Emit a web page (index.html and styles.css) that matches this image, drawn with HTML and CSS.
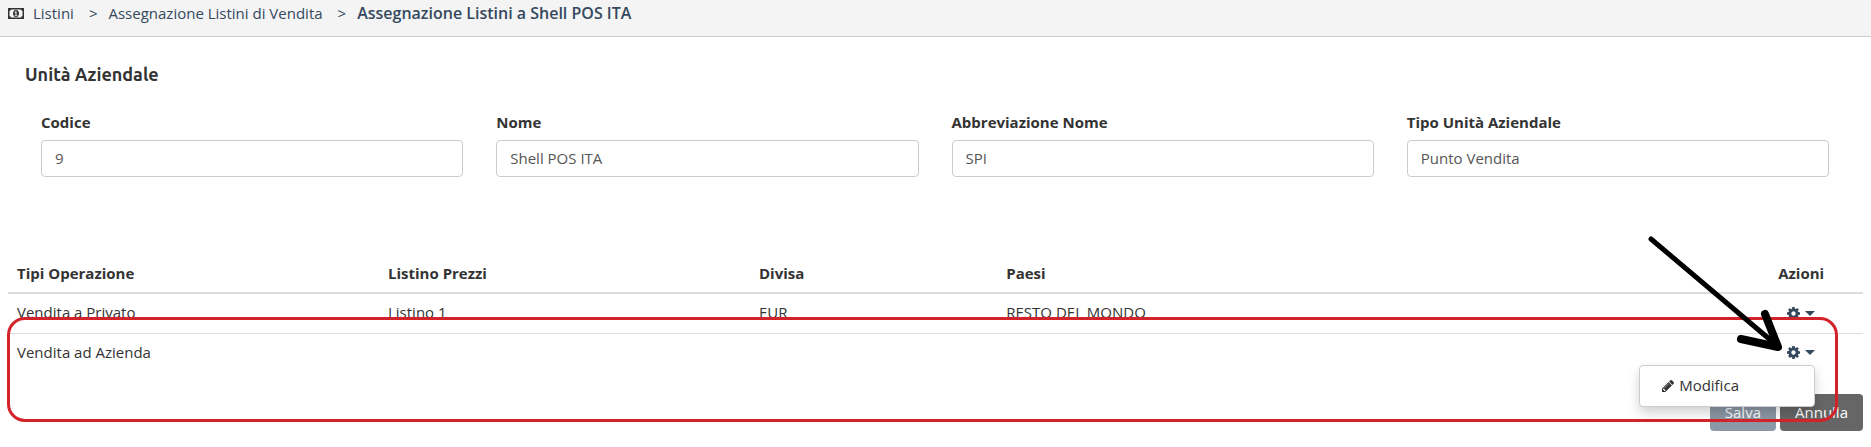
FILE: index.html
```html
<!DOCTYPE html>
<html lang="it">
<head>
    <meta charset="UTF-8">
    <meta name="viewport" content="width=device-width, initial-scale=1.0">
    <title>Assegnazione Listini</title>

    <link rel="stylesheet" href="styles.css">
</head>
<body>
    <nav class="breadcrumb">
        <svg class="icon-money" viewBox="0 0 16 11">
            <path fill-rule="evenodd" d="M0 0h16v11H0zM3 1.500A2 2 0 0 1 1.500 3v5A2 2 0 0 1 3 9.500h10A2 2 0 0 1 14.500 8V3A2 2 0 0 1 13 1.500z"/>
            <path fill-rule="evenodd" d="M8 2c2 0 3 1.600 3 3.500S10 9 8 9 5 7.400 5 5.500 6 2 8 2zM7.600 3.200L6.500 4.200l.5.600.5-.4V7h-.9v.8h2.800V7h-.9V3.200z"/>
        </svg>
        <a href="#">Listini</a>
        <span class="separator">&gt;</span>
        <a href="#">Assegnazione Listini di Vendita</a>
        <span class="separator">&gt;</span>
        <a href="#" class="current">Assegnazione Listini a Shell POS ITA</a>
    </nav>

    <main class="content">
        <h1>Unità Aziendale</h1>

        <div class="form-row">
            <div class="form-group">
                <label for="codice">Codice</label>
                <input type="text" id="codice" value="9" readonly>
            </div>
            <div class="form-group">
                <label for="nome">Nome</label>
                <input type="text" id="nome" value="Shell POS ITA" readonly>
            </div>
            <div class="form-group">
                <label for="abbreviazione">Abbreviazione Nome</label>
                <input type="text" id="abbreviazione" value="SPI" readonly>
            </div>
            <div class="form-group">
                <label for="tipo">Tipo Unità Aziendale</label>
                <input type="text" id="tipo" value="Punto Vendita" readonly>
            </div>
        </div>

        <div class="listini">
            <table>
                <thead>
                    <tr>
                        <th class="col-tipi">Tipi Operazione</th>
                        <th class="col-listino">Listino Prezzi</th>
                        <th class="col-divisa">Divisa</th>
                        <th class="col-paesi">Paesi</th>
                        <th class="col-azioni">Azioni</th>
                    </tr>
                </thead>
                <tbody>
                    <tr>
                        <td>Vendita a Privato</td>
                        <td>Listino 1</td>
                        <td>EUR</td>
                        <td>RESTO DEL MONDO</td>
                        <td class="azioni">
                            <div class="dropdown">
                                <button type="button" class="toggle" aria-label="Azioni">
                                    <svg class="icon-cog" viewBox="0 128 1536 1536"><use href="#cog"/></svg>
                                    <span class="caret"></span>
                                </button>
                            </div>
                        </td>
                    </tr>
                    <tr>
                        <td>Vendita ad Azienda</td>
                        <td></td>
                        <td></td>
                        <td></td>
                        <td class="azioni">
                            <div class="dropdown">
                                <button type="button" class="toggle" aria-label="Azioni">
                                    <svg class="icon-cog" viewBox="0 128 1536 1536">
                                        <path id="cog" d="M1024 896q0-106-75-181t-181-75-181 75-75 181 75 181 181 75 181-75 75-181zm512-109v222q0 12-8 23t-20 13l-185 28q-19 54-39 91 35 50 107 138 10 12 10 25t-9 23q-27 37-99 108t-94 71q-12 0-26-9l-138-108q-44 23-91 38-16 136-29 186-7 28-36 28h-222q-14 0-24.500-8.500t-11.500-21.500l-28-184q-49-16-90-37l-141 107q-10 9-25 9-14 0-25-11-126-114-165-168-7-10-7-23 0-12 8-23 15-21 51-66.500t54-70.500q-27-50-41-99l-183-27q-13-2-21-12.500t-8-23.500v-222q0-12 8-23t19-13l186-28q14-46 39-92-40-57-107-138-10-12-10-24 0-10 9-23 26-36 98.500-107.500t94.500-71.500q13 0 26 10l138 107q44-23 91-38 16-136 29-186 7-28 36-28h222q14 0 24.500 8.500t11.500 21.500l28 184q49 16 90 37l142-107q9-9 24-9 13 0 25 10 129 119 165 170 7 8 7 22 0 12-8 23-15 21-51 66.500t-54 70.500q26 50 41 98l183 28q13 2 21 12.500t8 23.500z"/>
                                    </svg>
                                    <span class="caret"></span>
                                </button>
                                <div class="menu">
                                    <a href="#">
                                        <svg class="icon-pencil" viewBox="128 149 1515 1515">
                                            <path d="M491 1536l91-91-235-235-91 91v107h128v128h107zm523-928q0-22-22-22-10 0-17 7l-542 542q-7 7-7 17 0 22 22 22 10 0 17-7l542-542q7-7 7-17zm-54-192l416 416-832 832h-416v-416zm683 96q0 53-37 90l-166 166-416-416 166-165q36-38 90-38 53 0 91 38l235 234q37 39 37 91z"/>
                                        </svg>
                                        Modifica
                                    </a>
                                </div>
                            </div>
                        </td>
                    </tr>
                </tbody>
            </table>

            <div class="buttons">
                <button type="button" class="button salva">Salva</button>
                <button type="button" class="button annulla">Annulla</button>
            </div>

            <div class="highlight"></div>
            <svg class="arrow" viewBox="0 0 142 122">
                <path class="shaft" d="M5 5L128 109"/>
                <path class="head" d="M119 80L132 113L95 105"/>
            </svg>
        </div>
    </main>
</body>
</html>
```
FILE: styles.css
```css
* {
    box-sizing: border-box;
}

body {
    font-family: "Open Sans", sans-serif;
    font-size: 15px;
    line-height: 21px;
    color: #333;
    background-color: #fff;
    margin: 0;
}

a {
    color: inherit;
    text-decoration: none;
}

.breadcrumb {
    display: flex;
    align-items: center;
    height: 37px;
    padding: 0 8px 9px;
    background-color: #f4f4f4;
    border-bottom: 1px solid #ccc;
    color: #34495e;
}

.icon-money {
    width: 16px;
    height: 11px;
    margin-right: 9px;
    fill: #333;
}

.separator {
    margin: 0 11px 0 15px;
}

.current {
    font-size: 16px;
    font-weight: 600;
}

.content {
    padding: 26px 8px 0;
}

h1 {
    margin: 0 17px;
    font-family: Ubuntu, "Noto Sans", sans-serif;
    font-size: 18px;
    line-height: 22px;
    font-weight: 600;
}

.form-row {
    display: grid;
    grid-template-columns: repeat(4, 1fr);
    gap: 33px;
    padding: 27px 34px 0 33px;
}

.form-group {
    display: flex;
    flex-direction: column;
    gap: 7px;
}

label, th {
    font-weight: 700;
}

input[type="text"] {
    width: 100%;
    height: 37px;
    padding: 0 13px 2px;
    border: 1px solid #ccc;
    border-radius: 4px;
    font: inherit;
    color: #555;
}

.listini {
    position: relative;
    margin-top: 77px;
}

table {
    width: 100%;
    table-layout: fixed;
    border-collapse: separate;
    border-spacing: 0;
}

th, td {
    height: 39px;
    padding: 0 9px;
    text-align: left;
}

th {
    height: 40px;
    border-bottom: 2px solid #ddd;
}

td {
    padding-bottom: 2px;
}

tr + tr td {
    border-top: 1px solid #ddd;
}

.col-tipi, .col-listino {
    width: 20%;
}

.col-divisa {
    width: 13.33%;
}

.col-azioni {
    width: 6.67%;
}

.col-azioni, .azioni {
    text-align: center;
}

.dropdown {
    position: relative;
    display: inline-block;
    vertical-align: middle;
}

.toggle {
    display: flex;
    align-items: center;
    gap: 5px;
    height: 21px;
    padding: 0;
    border: none;
    background: none;
    color: #34495e;
    cursor: pointer;
}

.icon-cog {
    width: 13px;
    height: 13px;
    fill: currentColor;
}

.caret {
    border-top: 5px solid;
    border-left: 5px solid transparent;
    border-right: 5px solid transparent;
}

.menu {
    position: absolute;
    top: 100%;
    right: 0;
    z-index: 1;
    width: 176px;
    margin-top: 2px;
    padding: 9px 0 10px;
    background-color: #fff;
    border: 1px solid #ccc;
    border-radius: 4px;
    box-shadow: 0 6px 12px rgba(0, 0, 0, 0.18);
    text-align: left;
}

.menu a {
    display: flex;
    align-items: center;
    gap: 5px;
    padding: 0 22px;
}

.icon-pencil {
    width: 12px;
    height: 12px;
    fill: #333;
}

.buttons {
    display: flex;
    justify-content: flex-end;
    gap: 4px;
    margin-top: 22px;
}

.button {
    height: 37px;
    padding: 0 15px;
    border: none;
    border-radius: 4px;
    font: inherit;
    color: #fff;
    cursor: pointer;
}

.salva {
    background-color: #8c98a6;
}

.annulla {
    background-color: #666;
}

.highlight {
    position: absolute;
    z-index: 2;
    top: 63px;
    bottom: 9px;
    left: -1px;
    right: 25px;
    border: 3px solid #d2232a;
    border-radius: 18px;
    pointer-events: none;
}

.arrow {
    position: absolute;
    z-index: 3;
    top: -20px;
    right: 75px;
    width: 142px;
    height: 122px;
    fill: none;
    stroke: #000;
    stroke-linecap: round;
    stroke-linejoin: round;
    pointer-events: none;
}

.shaft {
    stroke-width: 5;
}

.head {
    stroke-width: 8;
}
```
